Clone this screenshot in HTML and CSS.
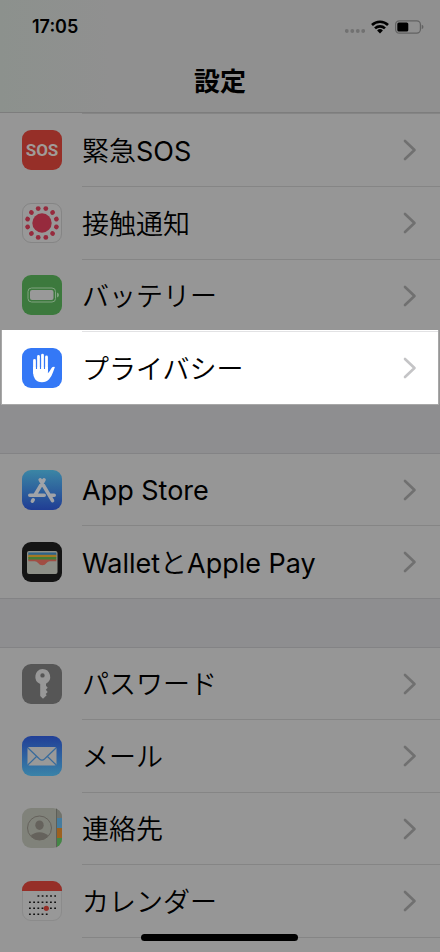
FILE: index.html
```html
<!DOCTYPE html>
<html lang="ja">
<head>
<meta charset="utf-8">
<meta name="viewport" content="width=device-width, initial-scale=1">
<title>設定</title>
<link rel="stylesheet" href="styles.css">
</head>
<body>
<svg class="defs" aria-hidden="true">
  <defs>
    <linearGradient id="store" x1="0" y1="0" x2="0" y2="1"><stop offset="0" stop-color="#3b86a5"/><stop offset="1" stop-color="#203d94"/></linearGradient>
    <linearGradient id="mail" x1="0" y1="0" x2="0" y2="1"><stop offset="0" stop-color="#213f97"/><stop offset="1" stop-color="#3a83a8"/></linearGradient>
    <clipPath id="tile"><rect width="40" height="40" rx="9"/></clipPath>
    <symbol id="chevron" viewBox="0 0 14 22"><path d="M2 2l9.500 9L2 20" fill="none" stroke="currentColor" stroke-width="2.600" stroke-linecap="round" stroke-linejoin="round"/></symbol>
  </defs>
</svg>
<header class="top">
  <div class="status">
    <time class="clock">17:05</time>
    <div class="signals">
      <svg width="20" height="6" viewBox="0 0 20 6" class="dots" aria-hidden="true"><g fill="#717171"><circle cx="1.800" cy="3" r="1.900"/><circle cx="7.300" cy="3" r="1.900"/><circle cx="12.800" cy="3" r="1.900"/><circle cx="18.200" cy="3" r="1.900"/></g></svg>
      <svg width="18" height="14" viewBox="0 0 18 14" aria-hidden="true"><g fill="none" stroke="#000" stroke-width="2.600"><path d="M1 5a11.400 11.400 0 0 1 16 0"/><path d="M4 8.400a7.200 7.200 0 0 1 10 0"/></g><path d="M9 13.400l-2.900-2.900a4.200 4.200 0 0 1 5.800 0z"/></svg>
      <svg width="29" height="14" viewBox="0 0 29 14" aria-hidden="true"><rect x=".6" y=".8" width="24.800" height="12.400" rx="3.600" fill="none" stroke="#626262" stroke-width="1.200"/><rect x="2.300" y="2.500" width="11" height="9" rx="1.600"/><path d="M26.700 4.800q1.800.6 1.800 2.200t-1.800 2.200z" fill="#626262"/></svg>
    </div>
  </div>
  <h1 class="title">設定</h1>
</header>
<main class="settings">
  <nav class="group first">
    <a class="row" href="#sos">
      <svg class="icon" viewBox="0 0 40 40" aria-hidden="true"><rect width="40" height="40" rx="9" fill="#962f28"/><text x="20" y="26" class="sos" text-anchor="middle">SOS</text></svg>
      <span class="body"><span class="label">緊急SOS</span><svg class="chev"><use href="#chevron"/></svg></span>
    </a>
    <a class="row" href="#exposure">
      <svg class="icon" viewBox="0 0 40 40" aria-hidden="true"><rect x=".5" y=".5" width="39" height="39" rx="8.500" fill="#989898" stroke="#858585"/><g fill="#962a3d"><circle cx="20" cy="20" r="9.700"/><g id="pair"><circle cx="16.200" cy="5.600" r="2.400"/><circle cx="23.800" cy="5.600" r="2.400"/><circle cx="16.200" cy="34.400" r="2.400"/><circle cx="23.800" cy="34.400" r="2.400"/></g><use href="#pair" transform="rotate(60 20 20)"/><use href="#pair" transform="rotate(120 20 20)"/></g></svg>
      <span class="body"><span class="label">接触通知</span><svg class="chev"><use href="#chevron"/></svg></span>
    </a>
    <a class="row" href="#battery">
      <svg class="icon" viewBox="0 0 40 40" aria-hidden="true"><rect width="40" height="40" rx="9" fill="#3c793d"/><rect x="6" y="13" width="27.500" height="14" rx="3.500" fill="none" stroke="#80a380"/><rect x="8" y="15" width="23.500" height="10" rx="2" fill="#999"/><path d="M35 17.500q2 .7 2 2.500t-2 2.500z" fill="#80a380"/></svg>
      <span class="body"><span class="label">バッテリー</span><svg class="chev"><use href="#chevron"/></svg></span>
    </a>
    <a class="row active" href="#privacy">
      <svg class="icon" viewBox="0 0 40 40" aria-hidden="true"><rect width="40" height="40" rx="9" fill="#3478f6"/><g stroke="#fff" stroke-width="2.800" stroke-linecap="round" fill="none"><path d="M12.500 12.500V25M16.500 8.500V22M20.500 7.200V22M24.500 9V23"/></g><path d="M11.100 19h14.800v6.200q1.800-1.400 3-4.200 1.300-2.700 4-2-.8 2.300-2 5.500-1.300 4-3.800 6.700-2.600 3-7.200 3-4.500 0-6.800-3-2-2.700-2-7z" fill="#fff"/><path d="M14.500 12v9M18.500 10v11M22.500 10v11" stroke="#3478f6" stroke-width="1.100"/></svg>
      <span class="body"><span class="label">プライバシー</span><svg class="chev"><use href="#chevron"/></svg></span>
    </a>
  </nav>
  <nav class="group">
    <a class="row" href="#appstore">
      <svg class="icon" viewBox="0 0 40 40" aria-hidden="true"><rect width="40" height="40" rx="9" fill="url(#store)"/><g fill="none" stroke="#a0a3a8" stroke-width="3.600" stroke-linecap="round"><path d="M22 9.800L13.300 24.500M18.200 9.800L30.500 30.700M7.800 25.200h14.400M28.200 25.200h4M11.200 29.800l-.8 1.300"/></g></svg>
      <span class="body"><span class="label">App Store</span><svg class="chev"><use href="#chevron"/></svg></span>
    </a>
    <a class="row" href="#wallet">
      <svg class="icon" viewBox="0 0 40 40" aria-hidden="true"><rect width="40" height="40" rx="9" fill="#141414"/><rect x="5" y="9" width="30.500" height="23" rx="2" fill="#8d8f87"/><rect x="6.300" y="10.500" width="28" height="3" fill="#2c638a"/><rect x="6.300" y="12.800" width="28" height="3" fill="#a57723"/><rect x="6.300" y="15" width="28" height="3" fill="#457c35"/><path d="M6.300 17.500h28v1.800h-6.500q-2 0-3.300 1.800-1.500 2.200-4.200 2.200t-4.200-2.200q-1.300-1.800-3.300-1.800H6.300z" fill="#a14e43"/></svg>
      <span class="body"><span class="label">WalletとApple Pay</span><svg class="chev"><use href="#chevron"/></svg></span>
    </a>
  </nav>
  <nav class="group">
    <a class="row" href="#passwords">
      <svg class="icon" viewBox="0 0 40 40" aria-hidden="true"><rect width="40" height="40" rx="9" fill="#565656"/><path fill-rule="evenodd" d="M20.500 5a7.800 7.800 0 0 1 3.500 14.700v2.100l1.700 1.900-1.900 2 1.900 2.200-2 2 1 1.400-3.700 3.400-2.800-2.800V20A7.800 7.800 0 0 1 20.500 5zm0 4.200a2.200 2.200 0 1 0 0 4.400 2.200 2.200 0 0 0 0-4.400z" fill="#989898"/></svg>
      <span class="body"><span class="label">パスワード</span><svg class="chev"><use href="#chevron"/></svg></span>
    </a>
    <a class="row" href="#mail">
      <svg class="icon" viewBox="0 0 40 40" aria-hidden="true"><rect width="40" height="40" rx="9" fill="url(#mail)"/><rect x="5.500" y="11" width="29" height="18.500" rx="1.800" fill="#999"/><path d="M6 12l11.500 11q2.500 2.200 5 0L34 12M6 28.800l8.800-8.500M34 28.800l-8.800-8.500" fill="none" stroke="#386b9c" stroke-width="1.200"/></svg>
      <span class="body"><span class="label">メール</span><svg class="chev"><use href="#chevron"/></svg></span>
    </a>
    <a class="row" href="#contacts">
      <svg class="icon" viewBox="0 0 40 40" aria-hidden="true"><g clip-path="url(#tile)"><path fill="#80827a" d="M0 0h40v40H0z"/><path fill="#71736c" d="M34 0h6v10h-6z"/><path fill="#457c9f" d="M35 10h5v10h-5z"/><path fill="#9d611f" d="M35 20h5v10h-5z"/><path fill="#438745" d="M35 30h5v10h-5z"/><path d="M34.500 0v40" stroke="#5d5f59"/><circle cx="17.500" cy="20" r="12" fill="none" stroke="#65625c"/><ellipse cx="17.500" cy="17.200" rx="4.200" ry="4.800" fill="#65625c"/><path d="M8.800 27.800q3.200-3.600 8.700-3.600t8.700 3.600q-3.400 4.200-8.700 4.200t-8.700-4.200z" fill="#65625c"/></g></svg>
      <span class="body"><span class="label">連絡先</span><svg class="chev"><use href="#chevron"/></svg></span>
    </a>
    <a class="row" href="#calendar">
      <svg class="icon" viewBox="0 0 40 40" aria-hidden="true"><rect x=".5" y=".5" width="39" height="39" rx="8.500" fill="#989898" stroke="#8b8b8b"/><path clip-path="url(#tile)" fill="#962f28" d="M0 0h40v10H0z"/><path d="M15.500 15h18.500M7 21.300h27M7 27.300h27M7 33.300h19" stroke="#111" stroke-width="1.600" stroke-dasharray="1.800 2.400"/><circle cx="24.300" cy="27.300" r="2.600" fill="#962f28"/></svg>
      <span class="body"><span class="label">カレンダー</span><svg class="chev"><use href="#chevron"/></svg></span>
    </a>
    <div class="rest"></div>
  </nav>
</main>
<div class="home"></div>
</body>
</html>
```
FILE: styles.css
```css
* { box-sizing: border-box; }
body {
  margin: 0;
  height: 100vh;
  overflow: hidden;
  display: flex;
  flex-direction: column;
  background: #8e8e90;
  color: #000;
  font-family: Inter, "Noto Sans CJK JP DemiLight", "Noto Sans CJK JP", sans-serif;
}
.defs { position: absolute; width: 0; height: 0; }
.top {
  flex: none;
  height: 113px;
  border-bottom: 1px solid #7d7d7d;
  background: linear-gradient(90deg, #8c918d, #909090 25%);
}
.status {
  display: flex;
  justify-content: space-between;
  align-items: center;
  height: 54px;
  padding: 0 16px 0 32px;
}
.clock { font-size: 18px; font-weight: 600; line-height: 20px; }
.signals { display: flex; align-items: center; gap: 6px; }
.dots { align-self: flex-end; }
.title {
  margin: 8px 0 0;
  font-family: "Noto Sans CJK JP", sans-serif;
  font-size: 26px;
  font-weight: 700;
  line-height: 36px;
  text-align: center;
}
.settings {
  flex: 1;
  display: flex;
  flex-direction: column;
  gap: 48px;
}
.group {
  background: #969696;
  border-top: 1px solid #838385;
  border-bottom: 1px solid #838385;
}
.group:last-child {
  flex: 1;
  display: flex;
  flex-direction: column;
  border-bottom: 0;
}
.row {
  flex: none;
  display: flex;
  align-items: center;
  height: 73px;
  padding-left: 22px;
  gap: 20px;
  color: inherit;
  text-decoration: none;
}
.row:nth-child(odd) { height: 72px; }
.row:first-child { height: 71px; }
.icon { width: 40px; height: 40px; flex: none; }
.body {
  flex: 1;
  align-self: stretch;
  display: flex;
  align-items: center;
  justify-content: space-between;
  padding-right: 23px;
  border-top: 1px solid #858585;
}
.row:first-child .body { border-top: 0; }
.first { border: 0; margin-bottom: 1px; }
.first .row:first-child { height: 73px; }
.first .row:first-child .body { border-top: 1px solid #858585; }
.label { padding-top: 3px; font-size: 27px; line-height: 40px; white-space: nowrap; }
.chev { width: 14px; height: 22px; color: #707070; }
.active {
  margin: 0 2px;
  padding-left: 20px;
  background: #fff;
  box-shadow: 0 -1px #fff, 0 0 0 1px #a8a8a8;
}
.active .body { padding-right: 21px; border-top-color: #e2e2e4; }
.active .chev { color: #c4c4c6; }
.rest { flex: 1; margin-left: 82px; border-top: 1px solid #858585; }
.sos {
  font-family: "Liberation Sans Narrow", Roboto, sans-serif;
  font-size: 17px;
  font-weight: 700;
  fill: #a09b98;
}
.home {
  position: fixed;
  bottom: 11px;
  left: 50%;
  width: 157px;
  height: 7px;
  margin-left: -79px;
  border-radius: 4px;
  background: #000;
}
```
